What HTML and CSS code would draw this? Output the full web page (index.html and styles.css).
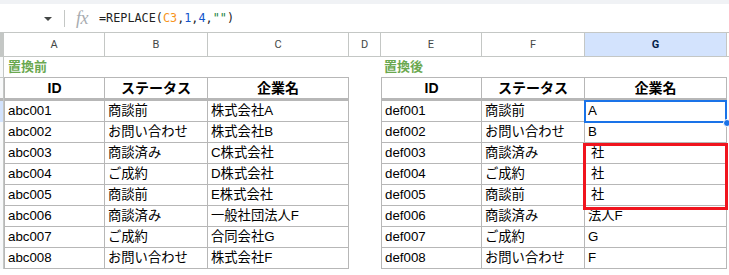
FILE: index.html
```html
<!doctype html>
<html lang="ja">
<head>
  <meta charset="UTF-8">
  <title>REPLACE 関数</title>
  <link rel="stylesheet" href="styles.css">
</head>
<body>
  <div class="sheet">
    <div class="toolbar-edge"></div>

    <div class="formula-bar">
      <span class="caret"></span>
      <span class="sep"></span>
      <span class="fx">fx</span>
      <span class="formula">=REPLACE(<span class="ref">C3</span>,<span class="num">1</span>,<span class="num">4</span>,<span class="str">""</span>)</span>
    </div>

    <div class="col-heads">
      <div class="corner"></div>
      <div class="col">A</div>
      <div class="col">B</div>
      <div class="col">C</div>
      <div class="col">D</div>
      <div class="col">E</div>
      <div class="col">F</div>
      <div class="col col-sel">G</div>
      <div class="col col-rest"></div>
    </div>

    <div class="body">
      <div class="row-heads">
        <div class="rh rh-title"></div>
        <div class="rh rh-head"></div>
        <div class="rh rh-sel"></div>
        <div class="rh rh-rest"></div>
      </div>

      <section class="block block-left">
        <div class="title">置換前</div>
        <div class="grid grid-left">
          <div class="th">ID</div><div class="th">ステータス</div><div class="th">企業名</div>
          <div class="td">abc001</div><div class="td">商談前</div><div class="td">株式会社A</div>
          <div class="td">abc002</div><div class="td">お問い合わせ</div><div class="td">株式会社B</div>
          <div class="td">abc003</div><div class="td">商談済み</div><div class="td">C株式会社</div>
          <div class="td">abc004</div><div class="td">ご成約</div><div class="td">D株式会社</div>
          <div class="td">abc005</div><div class="td">商談前</div><div class="td">E株式会社</div>
          <div class="td">abc006</div><div class="td">商談済み</div><div class="td">一般社団法人F</div>
          <div class="td">abc007</div><div class="td">ご成約</div><div class="td">合同会社G</div>
          <div class="td">abc008</div><div class="td">お問い合わせ</div><div class="td">株式会社F</div>
        </div>
      </section>

      <div class="col-d"></div>

      <section class="block block-right">
        <div class="title">置換後</div>
        <div class="grid grid-right">
          <div class="th">ID</div><div class="th">ステータス</div><div class="th">企業名</div>
          <div class="td">def001</div><div class="td">商談前</div><div class="td">A</div>
          <div class="td">def002</div><div class="td">お問い合わせ</div><div class="td">B</div>
          <div class="td">def003</div><div class="td">商談済み</div><div class="td td-hl">社</div>
          <div class="td">def004</div><div class="td">ご成約</div><div class="td td-hl">社</div>
          <div class="td">def005</div><div class="td">商談前</div><div class="td td-hl">社</div>
          <div class="td">def006</div><div class="td">商談済み</div><div class="td">法人F</div>
          <div class="td">def007</div><div class="td">ご成約</div><div class="td">G</div>
          <div class="td">def008</div><div class="td">お問い合わせ</div><div class="td">F</div>

          <div class="active-cell"><span class="handle"></span></div>
          <div class="red-box"></div>
        </div>
      </section>
    </div>
  </div>
</body>
</html>
```

FILE: styles.css
```css
* {
  margin: 0;
  padding: 0;
  box-sizing: border-box;
}
body {
  background: #fff;
  font-family: 'Liberation Sans', 'Noto Sans CJK JP', sans-serif;
  color: #000;
  overflow: hidden;
}
.sheet {
  width: 729px;
  height: 275px;
}
.toolbar-edge {
  height: 4px;
  background: #f0f2f5;
}

/* formula bar */
.formula-bar {
  height: 29px;
  display: flex;
  align-items: center;
  padding-left: 44px;
  border-bottom: 1px solid #c4c7c5;
}
.caret {
  width: 0;
  height: 0;
  border-left: 4px solid transparent;
  border-right: 4px solid transparent;
  border-top: 4px solid #444746;
  margin-top: 1px;
}
.sep {
  width: 1px;
  height: 17px;
  background: #c4c7c5;
  margin-left: 12px;
}
.fx {
  margin-left: 11px;
  font-family: 'Liberation Serif', serif;
  font-style: italic;
  font-size: 18px;
  color: #a8acb0;
  letter-spacing: -0.5px;
}
.formula {
  margin-left: 11px;
  font-family: 'DejaVu Sans Mono', monospace;
  font-size: 11.8px;
  color: #1f1f1f;
}
.formula .ref { color: #f7941d; }
.formula .num { color: #1155cc; }
.formula .str { color: #188038; }

/* column headers */
.col-heads {
  display: grid;
  grid-template-columns: 4px 101px 103px 141px 32px 101px 103px 142px 1fr;
  height: 24px;
  border-bottom: 1px solid #c4c7c5;
}
.corner {
  background: #c4c7c5;
}
.col {
  border-right: 1px solid #c4c7c5;
  font-family: Roboto, 'Liberation Sans', sans-serif;
  font-size: 11px;
  color: #444746;
  display: flex;
  align-items: center;
  justify-content: center;
}
.col:first-of-type { border-left: 1px solid #c4c7c5; }
.col-sel {
  background: #d3e3fd;
  color: #041e49;
  font-weight: bold;
}
.col-rest { border-right: none; }

/* sheet body */
.body {
  display: flex;
}
.row-heads {
  width: 4px;
  display: flex;
  flex-direction: column;
  background: #f8f9fa;
  border-right: 1px solid #c4c7c5;
}
.rh-title { height: 20px; }
.rh-head { height: 24px; border-top: 1px solid #c4c7c5; border-bottom: 3px solid #b7b7b7; }
.rh-sel { height: 21px; background: #d3e3fd; }
.rh-rest { flex: 1; }

.block {
  display: flex;
  flex-direction: column;
}
.title {
  height: 20px;
  line-height: 20px;
  padding-left: 3px;
  font-size: 13px;
  font-weight: bold;
  color: #6aa84f;
}
.block-left .title { padding-left: 4px; }
.col-d { width: 32px; }

.grid {
  display: grid;
  position: relative;
  border-left: 1px solid #b7b7b7;
  border-top: 1px solid #b7b7b7;
}
.grid-left { grid-template-columns: 100px 103px 141px; }
.grid-right { grid-template-columns: 100px 103px 142px; }

.th, .td {
  height: 21px;
  border-right: 1px solid #b7b7b7;
  border-bottom: 1px solid #b7b7b7;
  font-size: 13.3px;
  line-height: 20px;
  white-space: nowrap;
}
.th {
  height: 23px;
  border-bottom-width: 3px;
  text-align: center;
  font-weight: bold;
  font-size: 14px;
}
.td {
  padding-left: 3px;
}
.td-hl { padding-left: 6px; }

/* selection overlays */
.active-cell {
  position: absolute;
  left: 202px;
  top: 22px;
  width: 143px;
  height: 23px;
  border: 2px solid #1a73e8;
}
.handle {
  position: absolute;
  right: -6px;
  bottom: -6px;
  width: 8px;
  height: 8px;
  border-radius: 50%;
  background: #1a73e8;
  border: 1px solid #fff;
}
.red-box {
  position: absolute;
  left: 201px;
  top: 65px;
  width: 145px;
  height: 67px;
  border: 3px solid #f0141e;
}
```
